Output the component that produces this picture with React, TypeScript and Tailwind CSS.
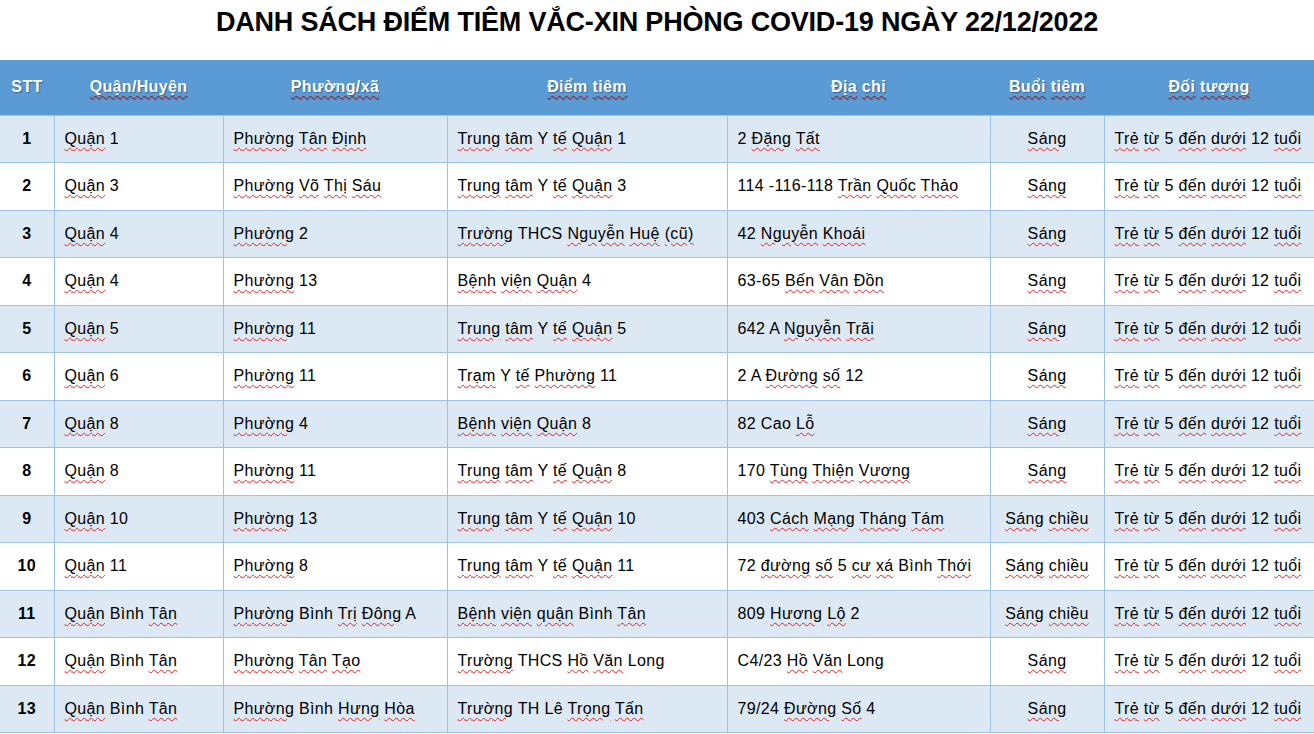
import React from 'react';

type Row = [string, string, string, string, string, string, string];

const rows: Row[] = [
  ['1', 'Quận 1', 'Phường Tân Định', 'Trung tâm Y tế Quận 1', '2 Đặng Tất', 'Sáng', 'Trẻ từ 5 đến dưới 12 tuổi'],
  ['2', 'Quận 3', 'Phường Võ Thị Sáu', 'Trung tâm Y tế Quận 3', '114 -116-118 Trần Quốc Thảo', 'Sáng', 'Trẻ từ 5 đến dưới 12 tuổi'],
  ['3', 'Quận 4', 'Phường 2', 'Trường THCS Nguyễn Huệ (cũ)', '42 Nguyễn Khoái', 'Sáng', 'Trẻ từ 5 đến dưới 12 tuổi'],
  ['4', 'Quận 4', 'Phường 13', 'Bệnh viện Quận 4', '63-65 Bến Vân Đồn', 'Sáng', 'Trẻ từ 5 đến dưới 12 tuổi'],
  ['5', 'Quận 5', 'Phường 11', 'Trung tâm Y tế Quận 5', '642 A Nguyễn Trãi', 'Sáng', 'Trẻ từ 5 đến dưới 12 tuổi'],
  ['6', 'Quận 6', 'Phường 11', 'Trạm Y tế Phường 11', '2 A Đường số 12', 'Sáng', 'Trẻ từ 5 đến dưới 12 tuổi'],
  ['7', 'Quận 8', 'Phường 4', 'Bệnh viện Quận 8', '82 Cao Lỗ', 'Sáng', 'Trẻ từ 5 đến dưới 12 tuổi'],
  ['8', 'Quận 8', 'Phường 11', 'Trung tâm Y tế Quận 8', '170 Tùng Thiện Vương', 'Sáng', 'Trẻ từ 5 đến dưới 12 tuổi'],
  ['9', 'Quận 10', 'Phường 13', 'Trung tâm Y tế Quận 10', '403 Cách Mạng Tháng Tám', 'Sáng chiều', 'Trẻ từ 5 đến dưới 12 tuổi'],
  ['10', 'Quận 11', 'Phường 8', 'Trung tâm Y tế Quận 11', '72 đường số 5 cư xá Bình Thới', 'Sáng chiều', 'Trẻ từ 5 đến dưới 12 tuổi'],
  ['11', 'Quận Bình Tân', 'Phường Bình Trị Đông A', 'Bệnh viện quận Bình Tân', '809 Hương Lộ 2', 'Sáng chiều', 'Trẻ từ 5 đến dưới 12 tuổi'],
  ['12', 'Quận Bình Tân', 'Phường Tân Tạo', 'Trường THCS Hồ Văn Long', 'C4/23 Hồ Văn Long', 'Sáng', 'Trẻ từ 5 đến dưới 12 tuổi'],
  ['13', 'Quận Bình Tân', 'Phường Bình Hưng Hòa', 'Trường TH Lê Trọng Tấn', '79/24 Đường Số 4', 'Sáng', 'Trẻ từ 5 đến dưới 12 tuổi'],
];

// words the spell checker left alone
const known = new Set(['Y', 'Bình', 'Cao', 'Long', 'Lê', 'STT']);

const isPlain = (w: string) => known.has(w) || /^[0-9A-Z\-\/()]+$/.test(w);

const Checked: React.FC<{ text: string; header?: boolean }> = ({ text, header }) => {
  const words = text.split(' ');
  return (
    <>
      {words.map((w, i) => (
        <React.Fragment key={i}>
          {i > 0 && ' '}
          {isPlain(w) ? (
            w
          ) : (
            <span
              className={
                'underline decoration-wavy decoration-1 underline-offset-[3px] ' +
                (header ? 'decoration-[#9a1a1a]' : 'decoration-[#e02020]')
              }
            >
              {w}
            </span>
          )}
        </React.Fragment>
      ))}
    </>
  );
};

const headers = ['STT', 'Quận/Huyện', 'Phường/xã', 'Điểm tiêm', 'Địa chỉ', 'Buổi tiêm', 'Đối tượng'];
const widths = ['w-[54px]', 'w-[169px]', 'w-[224px]', 'w-[280px]', 'w-[263px]', 'w-[114px]', 'w-[210px]'];

export default function App() {
  return (
    <div className="w-[1314px] h-[734px] overflow-hidden bg-white text-black font-['Liberation_Sans',Arial,sans-serif]">
      <div className="h-[60px] flex items-center justify-center pb-[16px]">
        <h1 className="text-[27px] font-bold tracking-[-0.2px] leading-none">
          DANH SÁCH ĐIỂM TIÊM VẮC-XIN PHÒNG COVID-19 NGÀY 22/12/2022
        </h1>
      </div>
      <table className="w-[1314px] table-fixed border-collapse text-[16px] tracking-[0.35px]">
        <colgroup>
          {widths.map((w, i) => (
            <col key={i} className={w} />
          ))}
        </colgroup>
        <thead>
          <tr className="h-[55px] bg-[#5b9bd5]">
            {headers.map((h, i) => (
              <th
                key={i}
                className="font-bold text-white text-center p-0 [text-shadow:1px_1px_1px_rgba(0,0,0,0.35)]"
              >
                <Checked text={h} header />
              </th>
            ))}
          </tr>
        </thead>
        <tbody>
          {rows.map((r, ri) => (
            <tr key={ri} className={'h-[47.5px] ' + (ri % 2 === 0 ? 'bg-[#dde8f5]' : 'bg-white')}>
              {r.map((c, ci) => (
                <td
                  key={ci}
                  className={
                    'border border-[#9dc3e6] first:border-l-0 whitespace-nowrap p-0 ' +
                    (ci === 0 ? 'text-center font-bold' : ci === 5 ? 'text-center' : 'text-left pl-[10px]')
                  }
                >
                  {ci === 0 ? c : <Checked text={c} />}
                </td>
              ))}
            </tr>
          ))}
        </tbody>
      </table>
    </div>
  );
}
